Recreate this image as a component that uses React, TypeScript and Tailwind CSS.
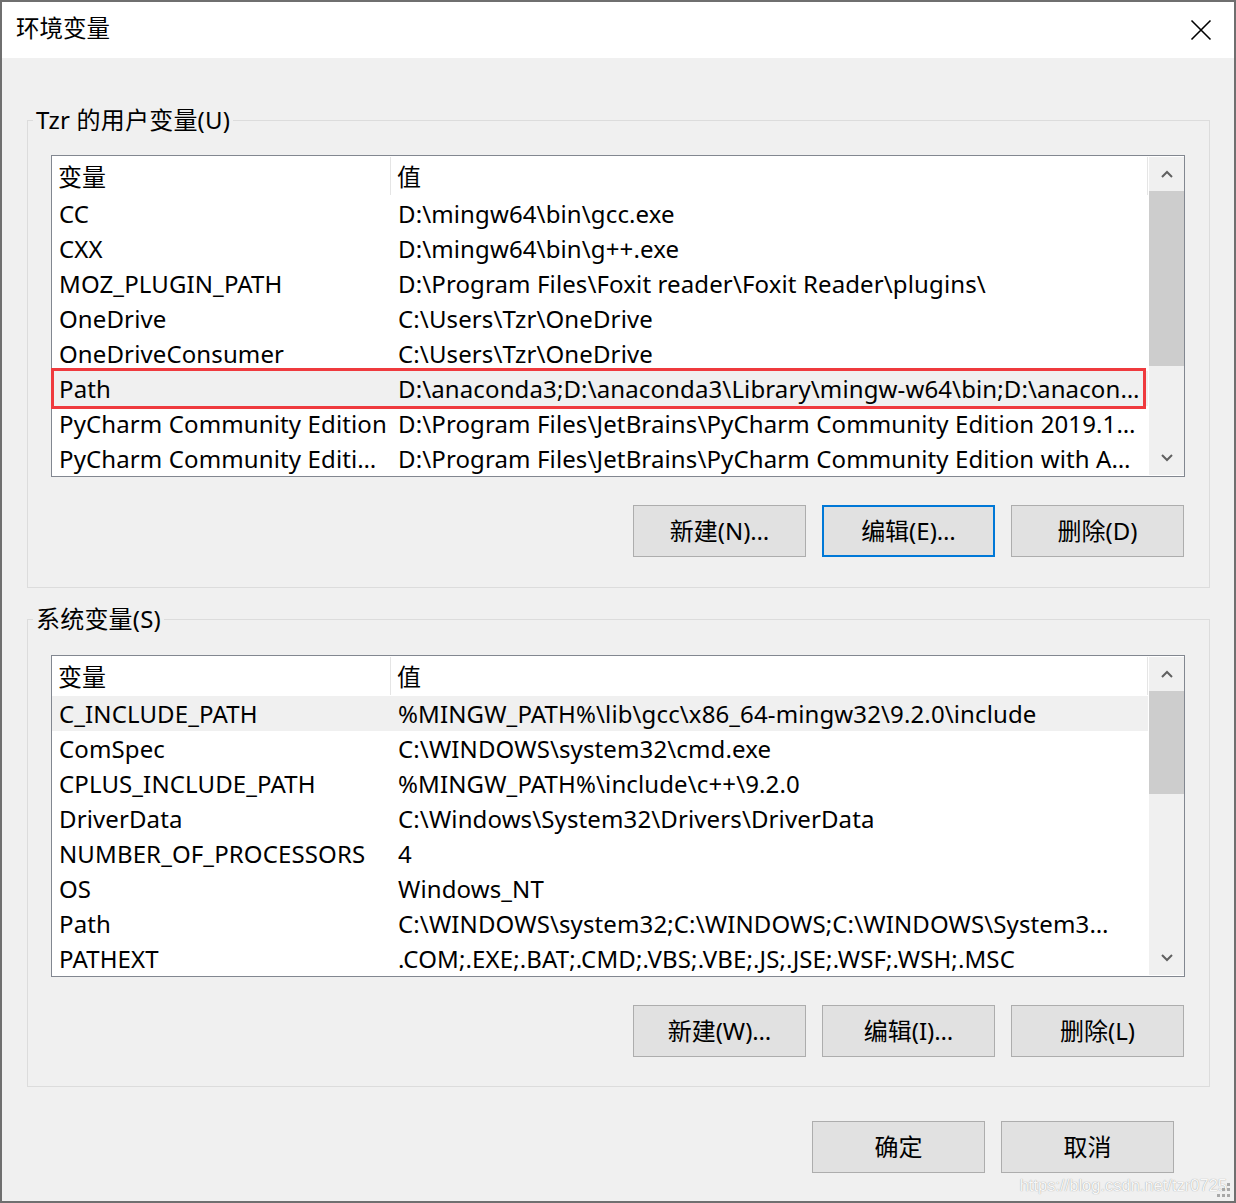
import React from "react";

type Row = [string, string];

const userRows: Row[] = [
  ["CC", "D:\\mingw64\\bin\\gcc.exe"],
  ["CXX", "D:\\mingw64\\bin\\g++.exe"],
  ["MOZ_PLUGIN_PATH", "D:\\Program Files\\Foxit reader\\Foxit Reader\\plugins\\"],
  ["OneDrive", "C:\\Users\\Tzr\\OneDrive"],
  ["OneDriveConsumer", "C:\\Users\\Tzr\\OneDrive"],
  ["Path", "D:\\anaconda3;D:\\anaconda3\\Library\\mingw-w64\\bin;D:\\anacon…"],
  ["PyCharm Community Edition", "D:\\Program Files\\JetBrains\\PyCharm Community Edition 2019.1…"],
  ["PyCharm Community Editi…", "D:\\Program Files\\JetBrains\\PyCharm Community Edition with A…"],
];

const sysRows: Row[] = [
  ["C_INCLUDE_PATH", "%MINGW_PATH%\\lib\\gcc\\x86_64-mingw32\\9.2.0\\include"],
  ["ComSpec", "C:\\WINDOWS\\system32\\cmd.exe"],
  ["CPLUS_INCLUDE_PATH", "%MINGW_PATH%\\include\\c++\\9.2.0"],
  ["DriverData", "C:\\Windows\\System32\\Drivers\\DriverData"],
  ["NUMBER_OF_PROCESSORS", "4"],
  ["OS", "Windows_NT"],
  ["Path", "C:\\WINDOWS\\system32;C:\\WINDOWS;C:\\WINDOWS\\System3…"],
  ["PATHEXT", ".COM;.EXE;.BAT;.CMD;.VBS;.VBE;.JS;.JSE;.WSF;.WSH;.MSC"],
];

function ChevronUp() {
  return (
    <svg width="12" height="8" viewBox="0 0 12 8">
      <path d="M1 7 L6 2 L11 7" fill="none" stroke="#606060" strokeWidth="2" />
    </svg>
  );
}

function ChevronDown() {
  return (
    <svg width="12" height="8" viewBox="0 0 12 8">
      <path d="M1 1 L6 6 L11 1" fill="none" stroke="#606060" strokeWidth="2" />
    </svg>
  );
}

function ListView({
  rows,
  hoverIndex,
  redIndex,
  thumbClass,
}: {
  rows: Row[];
  hoverIndex?: number;
  redIndex?: number;
  thumbClass: string;
}) {
  return (
    <div className="flex h-[322px] w-[1134px] border border-[#828790] bg-white">
      <div className="flex flex-1 flex-col">
        <div className="flex h-[40px] shrink-0 items-center">
          <div className="flex h-[38px] w-[339px] items-center border-r border-[#e5e5e5] pl-[6px] pt-[2px]">
            变量
          </div>
          <div className="flex h-[38px] flex-1 items-center border-r border-[#e5e5e5] pl-[6px] pt-[2px]">
            值
          </div>
        </div>
        {rows.map((r, i) => (
          <div
            key={i}
            className={
              "relative flex h-[35px] shrink-0 items-center tracking-[0.12px] " +
              (i === hoverIndex || i === redIndex ? "bg-[#f0f0f0]" : "")
            }
          >
            <div className="w-[340px] overflow-hidden whitespace-nowrap pl-[7px]">{r[0]}</div>
            <div className="flex-1 overflow-hidden whitespace-nowrap pl-[6px]">{r[1]}</div>
            {i === redIndex && (
              <div className="pointer-events-none absolute -top-[3px] -bottom-[3px] -left-[1px] right-[2px] border-[3px] border-[#ef3a3e]" />
            )}
          </div>
        ))}
      </div>
      <div className="flex w-[36px] flex-col bg-white py-px pl-px">
        <div className="flex flex-1 flex-col bg-[#f0f0f0]">
          <div className="flex h-[34px] shrink-0 items-center justify-center">
            <ChevronUp />
          </div>
          <div className="flex-1">
            <div className={"bg-[#cdcdcd] " + thumbClass} />
          </div>
          <div className="flex h-[34px] shrink-0 items-center justify-center">
            <ChevronDown />
          </div>
        </div>
      </div>
    </div>
  );
}

function Button({ label, focused }: { label: string; focused?: boolean }) {
  return (
    <div
      className={
        "flex h-[52px] w-[173px] items-center justify-center bg-[#e1e1e1] " +
        (focused ? "border-2 border-[#0078d7]" : "border border-[#adadad]")
      }
    >
      {label}
    </div>
  );
}

function Group({
  title,
  children,
  className,
}: {
  title: string;
  children: React.ReactNode;
  className: string;
}) {
  return (
    <div className={"relative w-[1183px] border border-[#dcdcdc] " + className}>
      <div className="absolute -top-[17px] left-[5px] bg-[#f0f0f0] px-[3px] leading-[32px] tracking-[0.2px]">
        {title}
      </div>
      {children}
    </div>
  );
}

export default function App() {
  return (
    <div className="relative flex h-[1203px] w-[1236px] flex-col border-2 border-[#6f6f6f] font-['Noto_Sans','Noto_Sans_CJK_SC',sans-serif] text-[24px] text-black">
      <div className="flex h-[56px] shrink-0 items-center justify-between bg-white pl-[14px] pr-[22px]">
        <div className="pb-[2px] text-[23.5px]">环境变量</div>
        <svg width="22" height="22" viewBox="0 0 22 22">
          <path d="M1.5 1.5 L20.5 20.5 M20.5 1.5 L1.5 20.5" stroke="#000" strokeWidth="1.6" />
        </svg>
      </div>
      <div className="flex flex-1 flex-col bg-[#f0f0f0] pl-[25px]">
        <Group title="Tzr 的用户变量(U)" className="mt-[62px] pl-[23px] pr-[24px] pt-[34px] pb-[30px]">
          <ListView rows={userRows} redIndex={5} thumbClass="h-[175px]" />
          <div className="mt-[28px] flex justify-end gap-[16px] pr-px">
            <Button label="新建(N)…" />
            <Button label="编辑(E)…" focused />
            <Button label="删除(D)" />
          </div>
        </Group>
        <Group title="系统变量(S)" className="mt-[31px] pl-[23px] pr-[24px] pt-[35px] pb-[29px]">
          <ListView rows={sysRows} hoverIndex={0} thumbClass="h-[103px]" />
          <div className="mt-[28px] flex justify-end gap-[16px] pr-px">
            <Button label="新建(W)…" />
            <Button label="编辑(I)…" />
            <Button label="删除(L)" />
          </div>
        </Group>
        <div className="mt-[34px] flex justify-end gap-[16px] pr-[60px]">
          <Button label="确定" />
          <Button label="取消" />
        </div>
      </div>
      <div className="pointer-events-none absolute bottom-[6px] right-[7px] font-['Liberation_Sans',sans-serif] text-[16.5px] leading-[20px] text-[#f8f8f8] [text-shadow:0_0_1px_#8a8a8a]">
        https://blog.csdn.net/tzr0725
      </div>
      <svg width="16" height="16" viewBox="0 0 16 16" className="pointer-events-none absolute bottom-[3px] right-[3px]">
        <rect x="12" y="1" width="3" height="3" fill="#a8a8a8" />
        <rect x="7" y="6" width="3" height="3" fill="#a8a8a8" />
        <rect x="12" y="6" width="3" height="3" fill="#a8a8a8" />
        <rect x="2" y="12" width="3" height="3" fill="#a8a8a8" />
        <rect x="7" y="12" width="3" height="3" fill="#a8a8a8" />
        <rect x="12" y="12" width="3" height="3" fill="#a8a8a8" />
      </svg>
    </div>
  );
}
